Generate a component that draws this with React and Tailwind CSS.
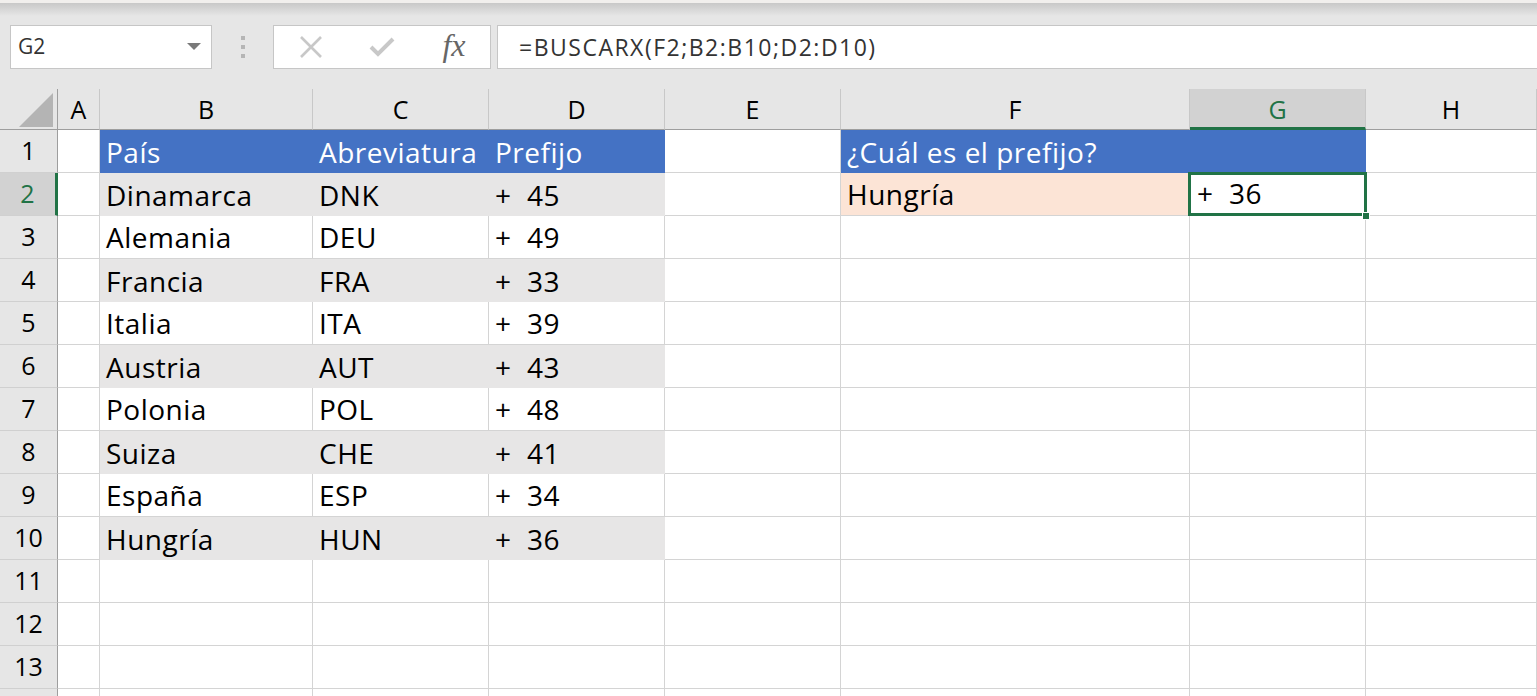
import React from "react";

const cols = ["A", "B", "C", "D", "E", "F", "G", "H"];

const data = [
  ["Dinamarca", "DNK", "45"],
  ["Alemania", "DEU", "49"],
  ["Francia", "FRA", "33"],
  ["Italia", "ITA", "39"],
  ["Austria", "AUT", "43"],
  ["Polonia", "POL", "48"],
  ["Suiza", "CHE", "41"],
  ["España", "ESP", "34"],
  ["Hungría", "HUN", "36"],
];

const cellFont = { fontFamily: '"Open Sans", sans-serif' };

function Cell({ className = "", children }) {
  return (
    <div
      className={
        "h-[43px] flex items-end pb-[3px] pl-[6px] text-[28px] tracking-[0.5px] leading-[36px] text-black whitespace-nowrap overflow-visible " +
        className
      }
    >
      {children}
    </div>
  );
}

function Prefix({ n }) {
  return (
    <span className="flex">
      <span className="w-[32px]">+</span>
      <span>{n}</span>
    </span>
  );
}

function RowHead({ n, selected }) {
  return (
    <div
      className={
        "h-[43px] flex items-center justify-center border-b border-[#d0d0d0] text-[25px] " +
        (selected
          ? "bg-[#d2d2d2] text-[#217346] border-r-[3px] border-r-[#217346]"
          : "bg-[#e6e6e6] text-black border-r border-r-[#9e9e9e]")
      }
    >
      {n}
    </div>
  );
}

export default function App() {
  const rows = [];
  for (let r = 1; r <= 14; r++) rows.push(r);

  return (
    <div
      className="w-[1537px] h-[696px] overflow-hidden bg-white"
      style={cellFont}
    >
      {/* Top toolbar */}
      <div className="h-[3px] bg-[#f1efed]" />
      <div className="h-[86px] bg-[#e6e6e6] relative">
        <div className="h-[13px] bg-linear-to-b from-[#c8c8c8] to-[#e6e6e6]" />
        <div className="flex items-start pl-[10px] pt-[9px]">
          {/* Name box */}
          <div className="w-[202px] h-[44px] bg-white border border-[#c6c6c6] flex items-center justify-between pl-[7px] pr-[10px]">
            <span className="text-[21px] text-[#333]">G2</span>
            <svg width="14" height="8" viewBox="0 0 14 8">
              <path d="M0 0 L14 0 L7 7 Z" fill="#7a7a7a" />
            </svg>
          </div>
          {/* Dots */}
          <div className="w-[61px] h-[44px] flex flex-col items-center justify-center gap-[5px]">
            <div className="w-[4px] h-[4px] bg-[#b5b5b5]" />
            <div className="w-[4px] h-[4px] bg-[#b5b5b5]" />
            <div className="w-[4px] h-[4px] bg-[#b5b5b5]" />
          </div>
          {/* Buttons */}
          <div className="w-[218px] h-[44px] bg-white border border-[#c6c6c6] flex items-center">
            <div className="w-[72px] flex justify-center pl-[2px]">
              <svg width="24" height="24" viewBox="0 0 24 24">
                <path d="M2 2 L22 22 M22 2 L2 22" stroke="#c8c8c8" strokeWidth="2.6" />
              </svg>
            </div>
            <div className="w-[72px] flex justify-center">
              <svg width="26" height="22" viewBox="0 0 26 22">
                <path d="M2 11 L9 18 L24 3" stroke="#c8c8c8" strokeWidth="4" fill="none" />
              </svg>
            </div>
            <div
              className="w-[72px] flex justify-center text-[32px] italic text-[#666] leading-none pb-[4px]"
              style={{ fontFamily: '"Liberation Serif", serif' }}
            >
              fx
            </div>
          </div>
          {/* Formula */}
          <div className="ml-[6px] flex-1 h-[44px] bg-white border border-[#c6c6c6] border-r-0 flex items-center pl-[21px]">
            <span className="text-[23px] tracking-[1.5px] text-[#333]">=BUSCARX(F2;B2:B10;D2:D10)</span>
          </div>
        </div>
      </div>

      {/* Grid */}
      <div className="grid grid-cols-[58px_42px_213px_176px_176px_176px_349px_176px_1fr]">
        {/* Header row */}
        <div className="h-[41px] bg-[#e6e6e6] border-b border-[#9e9e9e] border-r border-r-[#9e9e9e] relative">
          <svg className="absolute left-[19px] top-[4px]" width="35" height="34" viewBox="0 0 35 34">
            <path d="M0 34 L34 0 L34 34 Z" fill="#b4b4b4" />
          </svg>
        </div>
        {cols.map((c) => (
          <div
            key={c}
            className={
              "h-[41px] flex items-center justify-center text-[25px] border-r border-[#c8c8c8] pt-[2px] " +
              (c === "G"
                ? "bg-[#d2d2d2] text-[#217346] border-b-[3px] border-b-[#217346] pt-[4px]"
                : "bg-[#e6e6e6] text-black border-b border-b-[#9e9e9e]")
            }
          >
            {c}
          </div>
        ))}

        {rows.map((r) => {
          const item = r >= 2 && r <= 10 ? data[r - 2] : null;
          const gray = r % 2 === 0 && r <= 10;
          const base = "border-r border-b border-[#d4d4d4]";
          const fillBD = r === 1 ? "bg-[#4472c4] text-white border-b-0 border-r-0" : gray ? "bg-[#e7e6e6] border-r-0 border-b-0" : base;
          return (
            <React.Fragment key={r}>
              <RowHead n={r <= 13 ? r : ""} selected={r === 2} />
              <Cell className={base} />
              <Cell className={fillBD + (r === 1 ? " !text-white" : "")}>
                {r === 1 ? "País" : item ? item[0] : ""}
              </Cell>
              <Cell className={fillBD + (r === 1 ? " !text-white" : "")}>
                {r === 1 ? "Abreviatura" : item ? item[1] : ""}
              </Cell>
              <Cell className={fillBD + (r === 1 ? " !text-white" : "")}>
                {r === 1 ? "Prefijo" : item ? <Prefix n={item[2]} /> : ""}
              </Cell>
              <Cell className={base} />
              {r === 1 ? (
                <Cell className="bg-[#4472c4] !text-white overflow-visible">¿Cuál es el prefijo?</Cell>
              ) : r === 2 ? (
                <Cell className="bg-[#fce4d6] border-b border-[#d4d4d4]">Hungría</Cell>
              ) : (
                <Cell className={base} />
              )}
              {r === 1 ? (
                <Cell className="bg-[#4472c4]" />
              ) : r === 2 ? (
                <div className="h-[43px] relative border-b border-[#d4d4d4]">
                  <div className="absolute left-[-2px] top-[-1px] right-[-1px] bottom-[-1px] border-[3px] border-[#217346] flex items-end pb-[2px] pl-[6px] text-[28px] tracking-[0.5px] leading-[36px]">
                    <Prefix n="36" />
                  </div>
                  <div className="absolute right-[-4px] bottom-[-5px] w-[8px] h-[8px] bg-[#217346] border border-white" />
                </div>
              ) : (
                <Cell className={base} />
              )}
              <Cell className={base} />
            </React.Fragment>
          );
        })}
      </div>
    </div>
  );
}
